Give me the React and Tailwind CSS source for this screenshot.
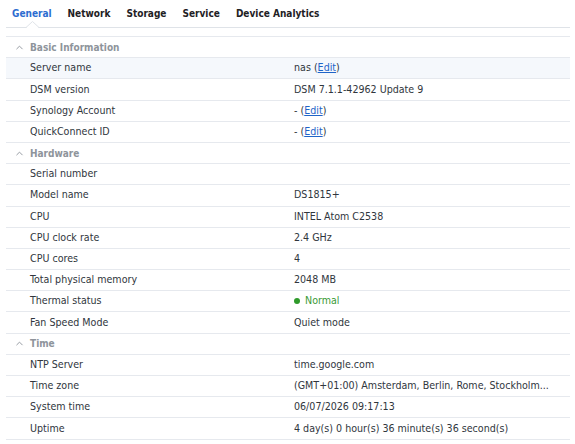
import { ChevronUp } from "lucide-react";

const sections = [
  {
    title: "Basic Information",
    rows: [
      { label: "Server name", value: "nas", edit: true, active: true },
      { label: "DSM version", value: "DSM 7.1.1-42962 Update 9" },
      { label: "Synology Account", value: "-", edit: true },
      { label: "QuickConnect ID", value: "-", edit: true },
    ],
  },
  {
    title: "Hardware",
    rows: [
      { label: "Serial number", value: "" },
      { label: "Model name", value: "DS1815+" },
      { label: "CPU", value: "INTEL Atom C2538" },
      { label: "CPU clock rate", value: "2.4 GHz" },
      { label: "CPU cores", value: "4" },
      { label: "Total physical memory", value: "2048 MB" },
      { label: "Thermal status", value: "Normal", status: true },
      { label: "Fan Speed Mode", value: "Quiet mode" },
    ],
  },
  {
    title: "Time",
    rows: [
      { label: "NTP Server", value: "time.google.com" },
      { label: "Time zone", value: "(GMT+01:00) Amsterdam, Berlin, Rome, Stockholm..." },
      { label: "System time", value: "06/07/2026 09:17:13" },
      { label: "Uptime", value: "4 day(s) 0 hour(s) 36 minute(s) 36 second(s)" },
    ],
  },
];

const tabs = ["General", "Network", "Storage", "Service", "Device Analytics"];

function Row({ row }) {
  return (
    <div
      className={`flex items-center h-[21.2px] border-b border-[#e6e9ee] whitespace-nowrap ${
        row.active ? "bg-[#f5f8fc]" : "bg-white"
      }`}
    >
      <div className="w-[288px] pl-6 text-[#30363d]">{row.label}</div>
      <div className="flex-1 text-[#30363d]">
        {row.status ? (
          <span className="flex items-center gap-[5px] text-[#3a9a36]">
            <span className="w-[6px] h-[6px] rounded-full bg-[#2f9a2a]" />
            {row.value}
          </span>
        ) : (
          <>
            {row.value}
            {row.edit && (
              <>
                {" ("}
                <span className="text-[#1f64c8] underline">Edit</span>
                {")"}
              </>
            )}
          </>
        )}
      </div>
    </div>
  );
}

export default function App() {
  return (
    <div
      className="w-[575px] h-[444px] bg-white overflow-hidden pl-[6px] pr-[5px] text-[10.6px]"
      style={{ fontFamily: '"DejaVu Sans Condensed", "DejaVu Sans", Verdana, sans-serif' }}
    >
      <div className="relative h-[28px] border-b border-[#dfe3e8] flex items-center gap-[16px] pl-[6px] text-[10px]">
        {tabs.map((t, i) => (
          <span
            key={t}
            className={`font-bold ${i === 0 ? "text-[#2d6dd0]" : "text-[#1e2124]"}`}
          >
            {t}
          </span>
        ))}
        <svg
          className="absolute left-[20px] bottom-[-1px]"
          width="13"
          height="7"
          viewBox="0 0 13 7"
        >
          <path d="M0 6.5 L6.5 0.5 L13 6.5" fill="white" stroke="#dfe3e8" strokeWidth="1" />
          <rect x="1" y="6" width="11" height="1" fill="white" />
        </svg>
      </div>

      <div className="mt-[8px] border-t border-[#e6e9ee]">
        {sections.map((s) => (
          <div key={s.title}>
            <div className="flex items-center h-[21.2px] border-b border-[#e6e9ee] bg-white">
              <ChevronUp size={11} strokeWidth={2} className="ml-[8px] mr-[5px] text-[#8e949b]" />
              <span className="font-bold text-[10px] text-[#8e949b]">{s.title}</span>
            </div>
            {s.rows.map((r) => (
              <Row key={r.label} row={r} />
            ))}
          </div>
        ))}
      </div>
    </div>
  );
}
